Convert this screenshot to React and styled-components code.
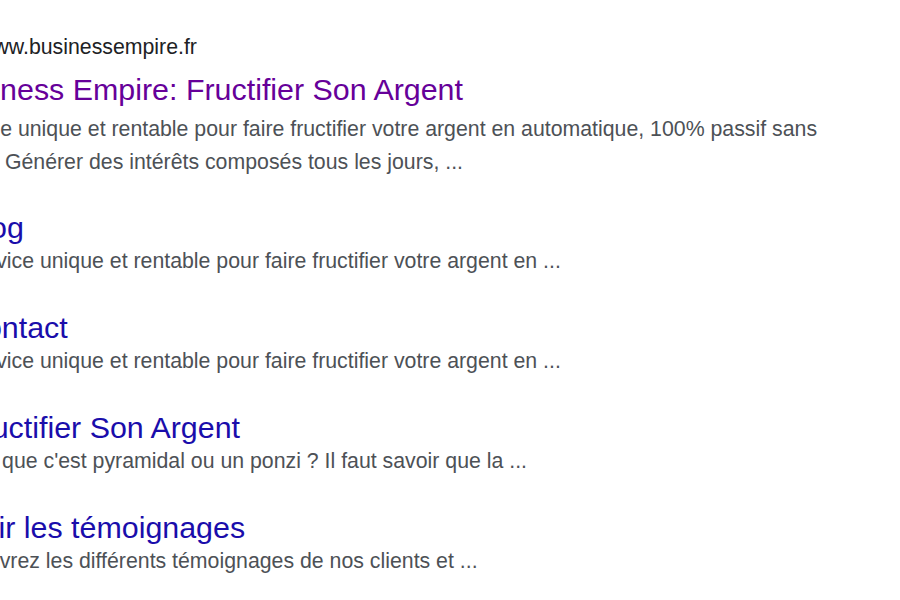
import React from "react";
import styled, { createGlobalStyle } from "styled-components";

const GlobalStyle = createGlobalStyle`
  html, body {
    margin: 0;
    padding: 0;
    background: #ffffff;
  }
  body {
    font-family: "Liberation Sans", Arial, sans-serif;
  }
`;

// the screenshot is a crop: the left part of the result sits outside the frame
const Frame = styled.div`
  width: 900px;
  height: 600px;
  overflow: hidden;
  background: #ffffff;
`;

const Result = styled.div`
  margin-left: -59px;
  padding-top: 32px;
  width: 900px;
`;

const UrlLine = styled.div`
  padding-left: 37px;
  font-size: 21.3px;
  line-height: 30px;
  color: #202124;
  white-space: nowrap;
`;

const Title = styled.a`
  display: block;
  margin-top: ${p => (p.$main ? "7px" : "0")};
  font-size: 30.4px;
  line-height: ${p => (p.$main ? "40px" : "36px")};
  color: ${p => (p.$visited ? "#660099" : "#1a0dab")};
  text-decoration: none;
  white-space: nowrap;
`;

const Snippet = styled.div`
  margin-top: ${p => (p.$main ? "4px" : "0")};
  font-size: 21.3px;
  line-height: 33px;
  color: #4d5156;
`;

const Sitelinks = styled.div`
  display: flex;
  flex-direction: column;
  gap: 31px;
  margin-top: 30px;
  padding-left: 22px;
`;

const Sitelink = styled.div`
  display: flex;
  flex-direction: column;
`;

const sitelinks = [
  {
    title: "Blog",
    text: "Service unique et rentable pour faire fructifier votre argent en ..."
  },
  {
    title: "Contact",
    text: "Service unique et rentable pour faire fructifier votre argent en ..."
  },
  {
    title: "Fructifier Son Argent",
    text: "Sûr que c'est pyramidal ou un ponzi ? Il faut savoir que la ..."
  },
  {
    title: "Voir les témoignages",
    text: "Délivrez les différents témoignages de nos clients et ..."
  }
];

export default function App() {
  return (
    <>
      <GlobalStyle />
      <Frame>
        <Result>
          <UrlLine>www.businessempire.fr</UrlLine>
          <Title $main $visited href="#">
            Business Empire: Fructifier Son Argent
          </Title>
          <Snippet $main>
            Service unique et rentable pour faire fructifier votre argent en
            automatique, 100% passif sans risque Générer des intérêts composés
            tous les jours, ...
          </Snippet>
          <Sitelinks>
            {sitelinks.map(link => (
              <Sitelink key={link.title}>
                <Title href="#">{link.title}</Title>
                <Snippet>{link.text}</Snippet>
              </Sitelink>
            ))}
          </Sitelinks>
        </Result>
      </Frame>
    </>
  );
}
